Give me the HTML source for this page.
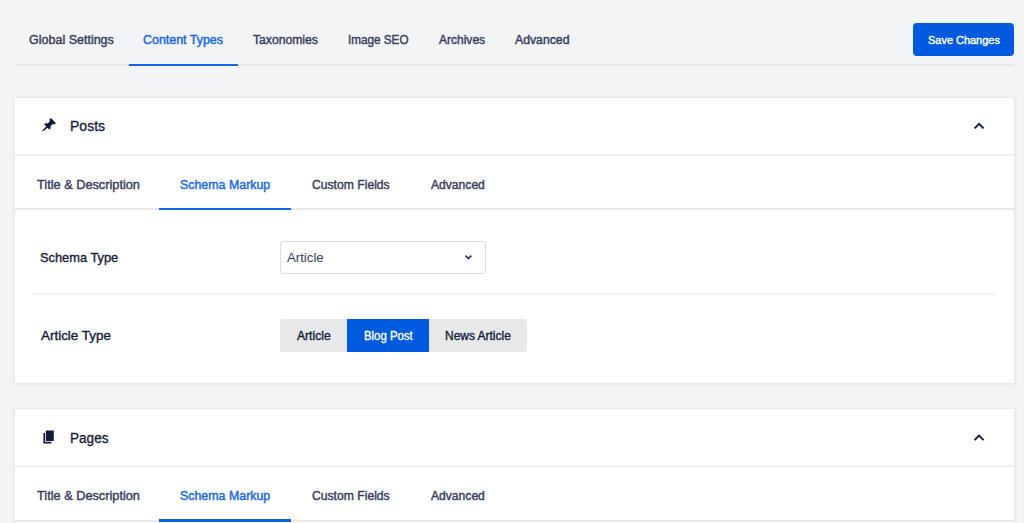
<!DOCTYPE html>
<html>
<head>
<meta charset="utf-8">
<style>
html,body{margin:0;padding:0;}
body{width:1024px;height:523px;overflow:hidden;background:#F3F4F5;position:relative;font-family:"Liberation Sans",sans-serif;color:#141B38;}
.a{position:absolute;white-space:nowrap;}
.line{position:absolute;background:#E8E8EB;}
.bar{position:absolute;background:#005AE0;}
.card{position:absolute;left:14px;width:999px;background:#fff;border:1px solid #E9EAED;box-shadow:0 1px 4px rgba(0,0,0,0.06);}
svg{position:absolute;overflow:visible;}
</style>
</head>
<body>
<!-- top nav -->
<div class="line" style="left:15px;top:64px;width:999px;height:2px;"></div>
<div class="bar" style="left:129px;top:64px;width:109px;height:2px;background:#1466E4;"></div>
<div class="a" style="left:913px;top:23px;width:101px;height:33px;background:#005AE0;border-radius:4px;"></div>

<!-- card 1 -->
<div class="card" style="top:97px;height:285px;"></div>
<div class="line" style="left:15px;top:154px;width:999px;height:2px;background:#F0F0F3;"></div>
<svg style="left:40.6px;top:117px" width="16" height="16" viewBox="0 0 20 20"><path fill="#141B38" d="M10.44 3.02l1.82-1.82 6.36 6.35-1.830 1.82c-1.05-.68-2.48-.57-3.41.36l-.75.75c-.92.93-1.04 2.35-.35 3.41l-1.83 1.82-2.41-2.41-2.8 2.79c-.42.42-3.38 2.71-3.8 2.29s1.86-3.39 2.28-3.81l2.79-2.790L4.1 9.36l1.83-1.82c1.05.69 2.48.57 3.4-.36l.75-.75c.93-.92 1.05-2.35.36-3.41z"/></svg>
<svg style="left:0;top:0" width="1" height="1"><polyline points="974.6,128.4 979.1,123.9 983.6,128.4" fill="none" stroke="#141B38" stroke-width="1.9"/></svg>
<div class="line" style="left:15px;top:208px;width:999px;height:2px;"></div>
<div class="bar" style="left:159px;top:208px;width:132px;height:2px;background:#1466E4;"></div>

<div class="a" style="left:280px;top:241px;width:204px;height:31px;border:1px solid #DCDDE1;border-radius:3px;background:#fff;"></div>
<svg style="left:0;top:0" width="1" height="1"><polyline points="465.4,255.6 468.4,258.5 471.4,255.6" fill="none" stroke="#2E3452" stroke-width="1.7"/></svg>
<div class="line" style="left:33px;top:293px;width:962px;height:2px;background:#F1F1F3;"></div>

<div class="a" style="left:280px;top:319px;width:247px;height:33px;background:#E8E8EB;border-radius:3px;"></div>
<div class="a" style="left:347px;top:319px;width:82px;height:33px;background:#005AE0;"></div>

<!-- card 2 -->
<div class="card" style="top:408px;height:200px;"></div>
<div class="line" style="left:15px;top:465px;width:999px;height:2px;background:#F0F0F3;"></div>
<svg style="left:40.7px;top:428.9px" width="16" height="16" viewBox="0 0 20 20"><path fill="#141B38" d="M6 15V2h10v13H6zm-1 1h8v2H3V5h2v11z"/></svg>
<svg style="left:0;top:0" width="1" height="1"><polyline points="974.6,440.1 979.1,435.6 983.6,440.1" fill="none" stroke="#141B38" stroke-width="1.9"/></svg>
<div class="line" style="left:15px;top:520px;width:999px;height:2px;"></div>
<div class="bar" style="left:159px;top:519px;width:132px;height:3px;background:#0A60E2;"></div>

<div class="a" style="left:28.91px;top:33.00px;font-size:13px;line-height:13px;transform:scaleX(0.9622);transform-origin:0 0;color:#3A405E;-webkit-text-stroke:0.45px #3A405E;">Global Settings</div>
<div class="a" style="left:142.68px;top:33.00px;font-size:13px;line-height:13px;transform:scaleX(0.9570);transform-origin:0 0;color:#1A68E2;-webkit-text-stroke:0.45px #1A68E2;">Content Types</div>
<div class="a" style="left:252.52px;top:33.00px;font-size:13px;line-height:13px;transform:scaleX(0.9350);transform-origin:0 0;color:#3A405E;-webkit-text-stroke:0.45px #3A405E;">Taxonomies</div>
<div class="a" style="left:347.51px;top:33.00px;font-size:13px;line-height:13px;transform:scaleX(0.9001);transform-origin:0 0;color:#3A405E;-webkit-text-stroke:0.45px #3A405E;">Image SEO</div>
<div class="a" style="left:438.63px;top:33.00px;font-size:13px;line-height:13px;transform:scaleX(0.9242);transform-origin:0 0;color:#3A405E;-webkit-text-stroke:0.45px #3A405E;">Archives</div>
<div class="a" style="left:514.53px;top:33.00px;font-size:13px;line-height:13px;transform:scaleX(0.9425);transform-origin:0 0;color:#3A405E;-webkit-text-stroke:0.45px #3A405E;">Advanced</div>
<div class="a" style="left:927.76px;top:35.00px;font-size:11.5px;line-height:11.5px;transform:scaleX(0.9527);transform-origin:0 0;color:#ffffff;-webkit-text-stroke:0.4px #ffffff;">Save Changes</div>
<div class="a" style="left:69.89px;top:119.00px;font-size:14px;line-height:14px;transform:scaleX(1.0038);transform-origin:0 0;color:#141B38;-webkit-text-stroke:0.3px #141B38;">Posts</div>
<div class="a" style="left:36.81px;top:178.00px;font-size:13px;line-height:13px;transform:scaleX(0.9804);transform-origin:0 0;color:#3A405E;-webkit-text-stroke:0.45px #3A405E;">Title &amp; Description</div>
<div class="a" style="left:179.79px;top:178.00px;font-size:13px;line-height:13px;transform:scaleX(0.9535);transform-origin:0 0;color:#1A68E2;-webkit-text-stroke:0.45px #1A68E2;">Schema Markup</div>
<div class="a" style="left:311.65px;top:178.00px;font-size:13px;line-height:13px;transform:scaleX(0.9353);transform-origin:0 0;color:#3A405E;-webkit-text-stroke:0.45px #3A405E;">Custom Fields</div>
<div class="a" style="left:430.53px;top:178.00px;font-size:13px;line-height:13px;transform:scaleX(0.9313);transform-origin:0 0;color:#3A405E;-webkit-text-stroke:0.45px #3A405E;">Advanced</div>
<div class="a" style="left:39.81px;top:251.00px;font-size:13px;line-height:13px;transform:scaleX(0.9867);transform-origin:0 0;color:#141B38;-webkit-text-stroke:0.35px #141B38;">Schema Type</div>
<div class="a" style="left:286.66px;top:251.00px;font-size:13px;line-height:13px;transform:scaleX(1.0154);transform-origin:0 0;color:#3A405E;">Article</div>
<div class="a" style="left:40.74px;top:329.00px;font-size:13px;line-height:13px;transform:scaleX(1.0322);transform-origin:0 0;color:#141B38;-webkit-text-stroke:0.35px #141B38;">Article Type</div>
<div class="a" style="left:296.94px;top:330.00px;font-size:12px;line-height:12px;transform:scaleX(1.0084);transform-origin:0 0;color:#141B38;-webkit-text-stroke:0.35px #141B38;">Article</div>
<div class="a" style="left:363.82px;top:330.00px;font-size:12px;line-height:12px;transform:scaleX(0.9461);transform-origin:0 0;color:#ffffff;-webkit-text-stroke:0.35px #ffffff;">Blog Post</div>
<div class="a" style="left:444.91px;top:330.00px;font-size:12px;line-height:12px;transform:scaleX(0.9971);transform-origin:0 0;color:#141B38;-webkit-text-stroke:0.35px #141B38;">News Article</div>
<div class="a" style="left:69.62px;top:431.00px;font-size:14px;line-height:14px;transform:scaleX(0.9692);transform-origin:0 0;color:#141B38;-webkit-text-stroke:0.3px #141B38;">Pages</div>
<div class="a" style="left:36.81px;top:489.00px;font-size:13px;line-height:13px;transform:scaleX(0.9804);transform-origin:0 0;color:#3A405E;-webkit-text-stroke:0.45px #3A405E;">Title &amp; Description</div>
<div class="a" style="left:179.79px;top:489.00px;font-size:13px;line-height:13px;transform:scaleX(0.9535);transform-origin:0 0;color:#1A68E2;-webkit-text-stroke:0.45px #1A68E2;">Schema Markup</div>
<div class="a" style="left:311.65px;top:489.00px;font-size:13px;line-height:13px;transform:scaleX(0.9353);transform-origin:0 0;color:#3A405E;-webkit-text-stroke:0.45px #3A405E;">Custom Fields</div>
<div class="a" style="left:430.53px;top:489.00px;font-size:13px;line-height:13px;transform:scaleX(0.9313);transform-origin:0 0;color:#3A405E;-webkit-text-stroke:0.45px #3A405E;">Advanced</div>
</body>
</html>
